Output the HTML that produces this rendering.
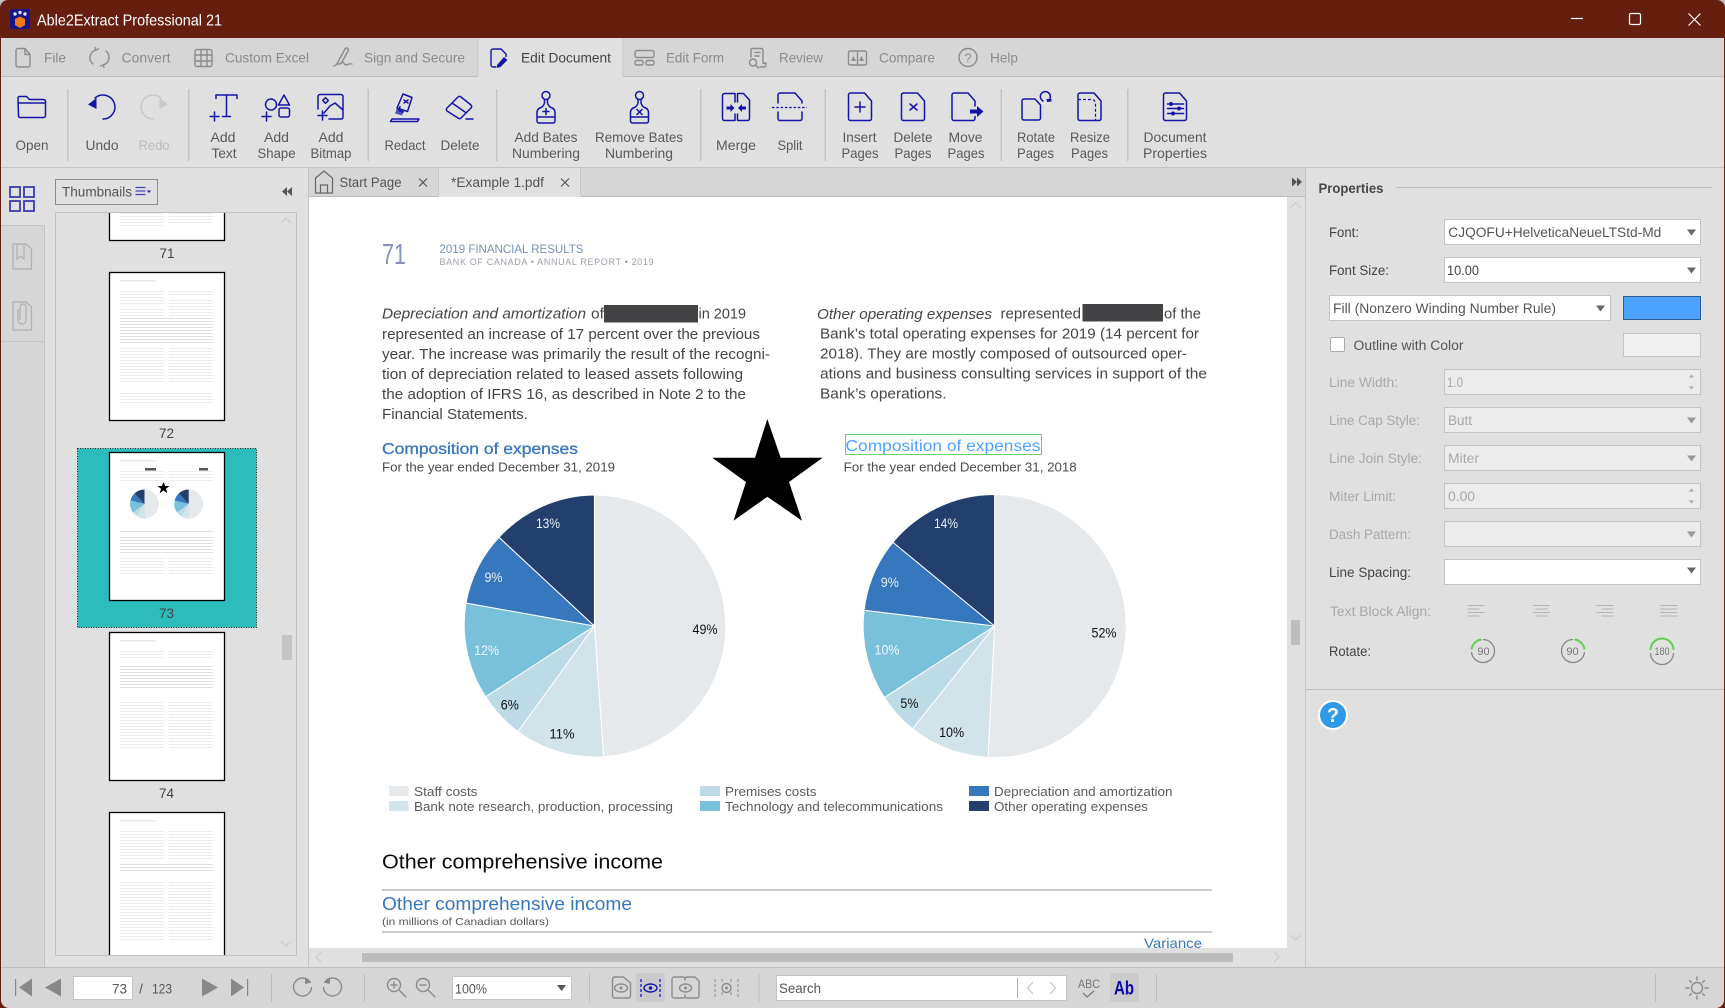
<!DOCTYPE html>
<html lang="en"><head><meta charset="utf-8"><title>Able2Extract Professional 21</title>
<style>
html,body{margin:0;padding:0;width:1725px;height:1008px;overflow:hidden;background:#e0e0e0}
svg{display:block;font-family:"Liberation Sans",sans-serif}
.r{font-size:14px;fill:#5a5a5a;text-anchor:middle}
.rd{font-size:14px;fill:#bbb;text-anchor:middle}
.m{font-size:14px;fill:#8c8c8c}
.l{font-size:13.5px;fill:#444}
.d{font-size:13.5px;fill:#a8a8a8}
.b{font-size:14.5px;fill:#454545}
.i{font-size:14.5px;fill:#454545;font-style:italic}
.p{font-size:13.5px;text-anchor:middle}
.lg{font-size:13px;fill:#5a5a5a}
.ic{fill:none;stroke:#1414a8;stroke-width:1.5;stroke-linejoin:round;stroke-linecap:round}
.gi{fill:none;stroke:#8c8c8c;stroke-width:1.4;stroke-linejoin:round;stroke-linecap:round}
</style></head><body>
<svg width="1725" height="1008" viewBox="0 0 1725 1008" xmlns="http://www.w3.org/2000/svg">
<defs>
<pattern id="g" width="4" height="3" patternUnits="userSpaceOnUse"><rect width="4" height="1" fill="#ececec"/></pattern>
<pattern id="h" width="4" height="3" patternUnits="userSpaceOnUse"><rect width="4" height="1" fill="#e0e0e0"/></pattern>
</defs>
<!-- window -->
<rect width="1725" height="1008" fill="#661f0f"/>
<rect x="1" y="38" width="1723" height="970" fill="#e0e0e0"/>
<!-- title -->
<rect x="10" y="9" width="20" height="20" rx="2" fill="#16168a"/>
<path d="M15 19l5-2.5 5 2.5v6l-5 3-5-3z" fill="#ee7a1c"/>
<circle cx="15" cy="14" r="1.7" fill="#dfe3ff"/><circle cx="20" cy="12.5" r="1.7" fill="#dfe3ff"/><circle cx="25" cy="14" r="1.7" fill="#dfe3ff"/>
<text x="37" y="25.5" font-size="16" fill="#fff" textLength="185" lengthAdjust="spacingAndGlyphs">Able2Extract Professional 21</text>
<path d="M1571 18.5h12" stroke="#fff" stroke-width="1.2"/>
<rect x="1629.5" y="13.5" width="11" height="11" rx="1.5" fill="none" stroke="#fff" stroke-width="1.2"/>
<path d="M1688.5 13.5l12 12M1700.5 13.5l-12 12" stroke="#fff" stroke-width="1.2"/>
<!-- menu -->
<rect x="1" y="38" width="1723" height="38" fill="#d6d6d6"/>
<rect x="1" y="76" width="1723" height="1" fill="#bdbdbd"/>
<rect x="478" y="38" width="145" height="39" fill="#e0e0e0"/>
<path d="M478 76V38M623 76V38" stroke="#c8c8c8"/>
<path class="gi" d="M18 48.5h7l5 6v10.500a2 2 0 0 1-2 2h-10a2 2 0 0 1-2-2v-14.500a2 2 0 0 1 2-2zM25 48.500v6h5"/>
<text class="m" x="44" y="62.500" textLength="22" lengthAdjust="spacingAndGlyphs">File</text>
<path class="gi" d="M93 64a8 8 0 0 1 3-14l-1-2.500M106 51a8 8 0 0 1-3 14l1 2.500M96 50l2.500-1M103 65l-2.500 1"/>
<text class="m" x="121.500" y="62.500" textLength="49" lengthAdjust="spacingAndGlyphs">Convert</text>
<path class="gi" d="M197 49.500h13a2 2 0 0 1 2 2v13a2 2 0 0 1-2 2h-13a2 2 0 0 1-2-2v-13a2 2 0 0 1 2-2zM195 55h17M195 61h17M201 49.500v17M207 49.500v17"/>
<text class="m" x="225" y="62.500" textLength="84" lengthAdjust="spacingAndGlyphs">Custom Excel</text>
<path class="gi" d="M334 66c3-1 4-3 5-6l6-11c1-2 4-1 3 2l-6 11c-1 2-4 3-5 1M342 62c2 0 2 3 4 3s3-2 6-1"/>
<text class="m" x="364" y="62.500" textLength="101" lengthAdjust="spacingAndGlyphs">Sign and Secure</text>
<path d="M493 49h8l5 5v3M493 49a2 2 0 0 0-2 2v14a2 2 0 0 0 2 2h3" fill="none" stroke="#1414a8" stroke-width="1.4"/>
<path d="M497 65l7-8 3.500 3-7 7-4 1z" fill="#1414a8"/>
<text x="521" y="62.500" font-size="14" fill="#444" textLength="90" lengthAdjust="spacingAndGlyphs">Edit Document</text>
<path class="gi" d="M637 50.500h15a2 2 0 0 1 2 2v3a2 2 0 0 1-2 2h-15a2 2 0 0 1-2-2v-3a2 2 0 0 1 2-2zM636.500 60.500h5a1.500 1.500 0 0 1 1.500 1.500v1.500a1.500 1.500 0 0 1-1.500 1.500h-5a1.500 1.500 0 0 1-1.500-1.500v-1.500a1.500 1.500 0 0 1 1.500-1.500zM647.500 60.500h5a1.500 1.500 0 0 1 1.500 1.500v1.500a1.500 1.500 0 0 1-1.500 1.500h-5a1.500 1.500 0 0 1-1.500-1.500v-1.500a1.500 1.500 0 0 1 1.500-1.500z"/>
<text class="m" x="666" y="62.500" textLength="58" lengthAdjust="spacingAndGlyphs">Edit Form</text>
<path class="gi" d="M751 57v-7a1.500 1.500 0 0 1 1.500-1.500h9a1.500 1.500 0 0 1 1.500 1.500v13.500l3-.5v2a2 2 0 0 1-2 2h-4M755 52.500h5M755 56h4"/>
<circle class="gi" cx="753" cy="62.500" r="3.500"/><path class="gi" d="M755.500 65l3 3"/>
<text class="m" x="779" y="62.500" textLength="44" lengthAdjust="spacingAndGlyphs">Review</text>
<rect class="gi" x="848.500" y="51" width="18" height="14" rx="1.500"/><path class="gi" d="M857.500 51v14"/>
<path d="M851 61l2.500-5 2.500 5zM859 61l2.500-5 2.500 5z" fill="#8c8c8c"/>
<text class="m" x="879" y="62.500" textLength="56" lengthAdjust="spacingAndGlyphs">Compare</text>
<circle class="gi" cx="968" cy="57.500" r="9"/>
<text x="968" y="62.500" font-size="13" fill="#8c8c8c" text-anchor="middle">?</text>
<text class="m" x="990" y="62.500" textLength="28" lengthAdjust="spacingAndGlyphs">Help</text>
<!-- ribbon -->
<rect x="1" y="77" width="1723" height="90" fill="#e0e0e0"/>
<rect x="1" y="167" width="1723" height="1" fill="#c4c4c4"/>
<g fill="#c4c4c4">
<rect x="67" y="89" width="1.500" height="72"/><rect x="188" y="89" width="1.500" height="72"/><rect x="367.500" y="89" width="1.500" height="72"/><rect x="496" y="89" width="1.500" height="72"/><rect x="700" y="89" width="1.500" height="72"/><rect x="824.500" y="89" width="1.500" height="72"/><rect x="1000.500" y="89" width="1.500" height="72"/><rect x="1127" y="89" width="1.500" height="72"/>
</g>
<!-- ribbon icons -->
<path class="ic" d="M18 98a1.500 1.500 0 0 1 1.500-1.500h7l3 3h14a2 2 0 0 1 2 2v14a2 2 0 0 1-2 2h-23.500a1.500 1.500 0 0 1-1.500-1.500zM18 103h27.500"/>
<path d="M88 104.500l8.500-6.500v11z" fill="#1414a8"/>
<path class="ic" d="M95 98a12 12 0 1 1 8 21"/>
<path d="M168 104.500l-8.500-6.500v11z" fill="#c8c8c8"/>
<path d="M161 98a12 12 0 1 0-8 21" fill="none" stroke="#c8c8c8" stroke-width="1.500" stroke-linecap="round"/>
<path class="ic" d="M216 95h21M216 95v3.500M237 95v3.500M226.500 95v21.500M222.500 116.500h8M210 116.500h9M214.500 112v9"/>
<circle class="ic" cx="271" cy="104.500" r="5.500"/><path class="ic" d="M284 95l-5.500 10h11zM281 108h6.500a2 2 0 0 1 2 2v5a2 2 0 0 1-2 2h-6.500a2 2 0 0 1-2-2v-5a2 2 0 0 1 2-2zM262 116.500h9M266.500 112v9"/>
<path class="ic" d="M318 109V96.500a2 2 0 0 1 2-2h21a2 2 0 0 1 2 2v20.500a2 2 0 0 1-2 2h-12M324 113l6-7 5-3 8 7"/>
<rect class="ic" x="323.500" y="98.500" width="4" height="4" transform="rotate(45 325.500 100.500)"/>
<path class="ic" d="M318 115.500h9M322.500 111v9"/>
<path class="ic" d="M397 108l6-14 9 3.500-4.500 14zM403 112l-4-1.500 1-4M392 119h27l-1.500 2.500h-27zM404 100l4 3M408 100l-4 3"/>
<path d="M397 108l7 3-2 4.500-7-2z" fill="#1414a8" opacity=".7"/>
<path class="ic" d="M447 108l11-11a2 2 0 0 1 3 0l10 8a2 2 0 0 1 0 3l-10 10a2 2 0 0 1-3 0l-11-7a2 2 0 0 1 0-3zM452 103l13 9M466 119h7"/>
<!-- add bates -->
<circle class="ic" cx="546" cy="95.500" r="4"/>
<path class="ic" d="M544.500 99.500v3c0 2-1 3-2.500 4.500M547.500 99.500v3c0 2 1 3 2.500 4.500M542 107c-3 1-5 2.500-5 5v9a2 2 0 0 0 2 2h14a2 2 0 0 0 2-2v-9c0-2.500-2-4-5-5M537 117h18M546 108.500v6M543 111.500h6"/>
<!-- remove bates -->
<circle class="ic" cx="639.500" cy="95.500" r="4"/>
<path class="ic" d="M638 99.500v3c0 2-1 3-2.500 4.500M641 99.500v3c0 2 1 3 2.500 4.500M635.500 107c-3 1-5 2.500-5 5v9a2 2 0 0 0 2 2h14a2 2 0 0 0 2-2v-9c0-2.500-2-4-5-5M630.500 117h18M637 109.500l5 5M642 109.500l-5 5"/>
<!-- merge -->
<path class="ic" d="M735 102V93.500h-10.500a2 2 0 0 0-2 2v23a2 2 0 0 0 2 2H735V114M737.500 102V93.500h6l6 6.500v18.500a2 2 0 0 1-2 2h-10V114"/>
<path d="M726.500 106.500h4v-2.500l4 4-4 4v-2.500h-4zM746 106.500h-4v-2.500l-4 4 4 4v-2.500h4z" fill="#1414a8"/>
<!-- split -->
<path class="ic" d="M778 103v-8a2 2 0 0 1 2-2h15l7 8v2M778 112v6.500a2 2 0 0 0 2 2h20a2 2 0 0 0 2-2V112"/><path d="M772 107.500h35" stroke="#1414a8" stroke-width="1.300" stroke-dasharray="2.500 1.800" fill="none"/>
<path class="ic" d="M848.500 95a2 2 0 0 1 2-2h14l7 8v17.500a2 2 0 0 1-2 2h-19a2 2 0 0 1-2-2zM860 102v10M855 107h10"/>
<path class="ic" d="M901.500 95a2 2 0 0 1 2-2h14l7 8v17.500a2 2 0 0 1-2 2h-19a2 2 0 0 1-2-2zM910 104l7 6M917 104l-7 6"/>
<!-- move -->
<path class="ic" d="M975 106v-5l-7-8h-14a2 2 0 0 0-2 2v23.500a2 2 0 0 0 2 2h19a2 2 0 0 0 2-2v-2"/><path d="M970 109.500h7v-3.500l6.500 5.500-6.500 5.500v-3.500h-7z" fill="#1414a8"/>
<path class="ic" d="M1022 101a2 2 0 0 1 2-2h11l5.500 6v13a2 2 0 0 1-2 2h-14.500a2 2 0 0 1-2-2zM1043 101a5 5 0 1 1 6-1"/><path d="M1046.500 99h5v2.500l-4.500.5z" fill="#1414a8"/>
<path class="ic" d="M1078 95a2 2 0 0 1 2-2h14l7 8v17.500a2 2 0 0 1-2 2h-19a2 2 0 0 1-2-2z"/><path d="M1078 99.500h14a4 4 0 0 1 3.500 4v17" fill="none" stroke="#1414a8" stroke-width="1.200" stroke-dasharray="3 2"/>
<path class="ic" d="M1163.500 95a2 2 0 0 1 2-2h14l7 8v17.500a2 2 0 0 1-2 2h-19a2 2 0 0 1-2-2zM1167.500 104h16M1167.500 108.500h16M1167.500 113.500h16"/>
<circle cx="1171" cy="104" r="2" fill="#1414a8"/><circle cx="1179" cy="108.500" r="2" fill="#1414a8"/><circle cx="1173" cy="113.500" r="2" fill="#1414a8"/>
<!-- ribbon labels -->
<text class="r" x="32" y="150" textLength="33" lengthAdjust="spacingAndGlyphs">Open</text>
<text class="r" x="102" y="150" textLength="33" lengthAdjust="spacingAndGlyphs">Undo</text>
<text class="rd" x="154" y="150" textLength="31" lengthAdjust="spacingAndGlyphs">Redo</text>
<text class="r" x="223" y="142" textLength="25" lengthAdjust="spacingAndGlyphs">Add</text><text class="r" x="224" y="158" textLength="25" lengthAdjust="spacingAndGlyphs">Text</text>
<text class="r" x="276.500" y="142" textLength="25" lengthAdjust="spacingAndGlyphs">Add</text><text class="r" x="276.500" y="158" textLength="38" lengthAdjust="spacingAndGlyphs">Shape</text>
<text class="r" x="331" y="142" textLength="25" lengthAdjust="spacingAndGlyphs">Add</text><text class="r" x="331" y="158" textLength="41" lengthAdjust="spacingAndGlyphs">Bitmap</text>
<text class="r" x="405" y="150" textLength="41" lengthAdjust="spacingAndGlyphs">Redact</text>
<text class="r" x="460" y="150" textLength="39" lengthAdjust="spacingAndGlyphs">Delete</text>
<text class="r" x="546" y="142" textLength="63" lengthAdjust="spacingAndGlyphs">Add Bates</text><text class="r" x="546" y="158" textLength="68" lengthAdjust="spacingAndGlyphs">Numbering</text>
<text class="r" x="639" y="142" textLength="88" lengthAdjust="spacingAndGlyphs">Remove Bates</text><text class="r" x="639" y="158" textLength="68" lengthAdjust="spacingAndGlyphs">Numbering</text>
<text class="r" x="736" y="150" textLength="40" lengthAdjust="spacingAndGlyphs">Merge</text>
<text class="r" x="790" y="150" textLength="25" lengthAdjust="spacingAndGlyphs">Split</text>
<text class="r" x="859.500" y="142" textLength="34" lengthAdjust="spacingAndGlyphs">Insert</text><text class="r" x="860" y="158" textLength="37" lengthAdjust="spacingAndGlyphs">Pages</text>
<text class="r" x="913" y="142" textLength="39" lengthAdjust="spacingAndGlyphs">Delete</text><text class="r" x="913" y="158" textLength="37" lengthAdjust="spacingAndGlyphs">Pages</text>
<text class="r" x="965.500" y="142" textLength="34" lengthAdjust="spacingAndGlyphs">Move</text><text class="r" x="966" y="158" textLength="37" lengthAdjust="spacingAndGlyphs">Pages</text>
<text class="r" x="1036" y="142" textLength="38" lengthAdjust="spacingAndGlyphs">Rotate</text><text class="r" x="1035.500" y="158" textLength="37" lengthAdjust="spacingAndGlyphs">Pages</text>
<text class="r" x="1090" y="142" textLength="40" lengthAdjust="spacingAndGlyphs">Resize</text><text class="r" x="1089.500" y="158" textLength="37" lengthAdjust="spacingAndGlyphs">Pages</text>
<text class="r" x="1175" y="142" textLength="63" lengthAdjust="spacingAndGlyphs">Document</text><text class="r" x="1175" y="158" textLength="64" lengthAdjust="spacingAndGlyphs">Properties</text>
<!-- left rail -->
<rect x="1" y="225" width="43" height="742" fill="#d6d6d6"/>
<rect x="1" y="225" width="43" height="1" fill="#c4c4c4"/><rect x="1" y="341" width="43" height="1" fill="#c4c4c4"/>
<rect x="44" y="225" width="1" height="742" fill="#c4c4c4"/>
<g fill="none" stroke="#3c3cb4" stroke-width="1.800"><rect x="10" y="187" width="10" height="10"/><rect x="24" y="187" width="10" height="10"/><rect x="10" y="201" width="10" height="10"/><rect x="24" y="201" width="10" height="10"/></g>
<path d="M13 244h13l5.500 5v20h-18.500zM17 244v15l3.500-3 3.500 3v-15" fill="none" stroke="#b0b0b0" stroke-width="1.200"/>
<path d="M13 302h13l5.500 5v23h-18.500zM18 309v11a4 4 0 0 0 8 0v-13a3 3 0 0 0-6 0v13" fill="none" stroke="#b0b0b0" stroke-width="1.200"/>
<!-- thumbnails header -->
<rect x="55.500" y="179.500" width="102" height="25" fill="#e0e0e0" stroke="#8c8c8c"/>
<text x="62" y="196.500" font-size="13.500" fill="#555" textLength="70" lengthAdjust="spacingAndGlyphs">Thumbnails</text>
<path d="M135.500 187.500h10M135.500 191h10M135.500 194.500h10" stroke="#4646bc" stroke-width="1.300"/><path d="M147 190.500h4l-2 2.500z" fill="#1414a8"/>
<path d="M287 187l-5 4.500 5 4.500zM292 187l-5 4.500 5 4.500z" fill="#555"/>
<!-- thumbnails list -->
<rect x="55.500" y="212.500" width="241" height="743" fill="#e0e0e0" stroke="#c0c0c0"/>
<svg x="56" y="213" width="240" height="742" viewBox="56 213 240 742">
<rect x="77.500" y="448.500" width="179" height="179" fill="#2dbcbc" stroke="#222" stroke-width="1" stroke-dasharray="1 1.500"/>
<g fill="#fff" stroke="#000" stroke-width="1.300">
<rect x="109.500" y="150" width="115" height="90.500"/><rect x="109.500" y="272.500" width="115" height="148"/><rect x="109.500" y="452.500" width="115" height="148"/><rect x="109.500" y="632.500" width="115" height="148"/><rect x="109.500" y="812.500" width="115" height="148"/>
</g>
<g fill="url(#g)">
<rect x="120" y="213" width="44" height="14"/><rect x="169" y="213" width="44" height="11"/>
<rect x="120" y="289" width="44" height="15"/><rect x="169" y="289" width="44" height="7"/><rect x="120" y="307" width="44" height="10"/><rect x="169" y="299" width="44" height="18"/>
<rect x="120" y="348" width="44" height="36"/><rect x="169" y="348" width="44" height="36"/><rect x="121" y="391" width="92" height="14"/>
<rect x="120" y="469" width="44" height="14"/><rect x="169" y="469" width="44" height="12"/><rect x="120" y="558" width="44" height="16"/><rect x="169" y="558" width="44" height="16"/>
<rect x="120" y="650" width="44" height="10"/><rect x="169" y="650" width="44" height="10"/><rect x="120" y="700" width="44" height="50"/><rect x="169" y="700" width="44" height="50"/>
<rect x="120" y="830" width="44" height="30"/><rect x="169" y="830" width="44" height="30"/><rect x="120" y="880" width="44" height="60"/><rect x="169" y="880" width="44" height="60"/>
</g>
<g fill="url(#h)">
<rect x="120" y="316" width="93" height="12"/><rect x="120" y="330" width="93" height="13"/>
<rect x="120" y="530" width="93" height="3"/><rect x="120" y="537" width="93" height="16"/>
<rect x="120" y="665" width="93" height="24"/>
<rect x="120" y="862" width="93" height="10"/>
</g>
<rect x="120" y="280" width="36" height="1.500" fill="#e8e8e8"/><rect x="120" y="460" width="36" height="1.500" fill="#e8e8e8"/><rect x="120" y="640" width="36" height="1.500" fill="#e8e8e8"/><rect x="120" y="820" width="36" height="1.500" fill="#e8e8e8"/>
<rect x="145" y="468" width="11" height="2.500" fill="#555"/><rect x="199" y="468" width="9" height="2.500" fill="#555"/>
<path d="M163.500 482l1.600 4h4.400l-3.500 2.800 1.300 4.400-3.800-2.700-3.800 2.700 1.300-4.400-3.500-2.800h4.400z" fill="#000"/>
<circle cx="144.500" cy="504" r="14.500" fill="#e6e9ec"/><path d="M144.500 504v-14.500a14.500 14.500 0 0 0-10 4z" fill="#233f6e"/><path d="M144.500 504l-10-10.500a14.500 14.500 0 0 0-4 7z" fill="#3777bd"/><path d="M144.500 504l-14-3.500a14.500 14.500 0 0 0 2.500 12z" fill="#79c0da"/><path d="M144.500 504l-11.500 8.500a14.500 14.500 0 0 0 4 3.500z" fill="#bcdbe7"/><path d="M144.500 504l-7.500 12a14.500 14.500 0 0 0 8.500 2.500z" fill="#d2e3ea"/>
<circle cx="188.700" cy="504" r="14.500" fill="#e6e9ec"/><path d="M188.700 504v-14.500a14.500 14.500 0 0 0-10 4z" fill="#233f6e"/><path d="M188.700 504l-10-10.500a14.500 14.500 0 0 0-4 7z" fill="#3777bd"/><path d="M188.700 504l-14-3.500a14.500 14.500 0 0 0 2.500 12z" fill="#79c0da"/><path d="M188.700 504l-11.500 8.500a14.500 14.500 0 0 0 4 3.500z" fill="#bcdbe7"/><path d="M188.700 504l-7.500 12a14.500 14.500 0 0 0 8 2.500z" fill="#d2e3ea"/>
<g font-size="13.500" fill="#444" text-anchor="middle"><text x="167" y="258">71</text><text x="166.500" y="438">72</text><text x="166.500" y="618">73</text><text x="166.500" y="798">74</text></g>
<path d="M281 223l5-5 5 5" fill="none" stroke="#cfcfcf" stroke-width="1.500"/><path d="M281 941l5 5 5-5" fill="none" stroke="#cfcfcf" stroke-width="1.500"/>
<rect x="282" y="635" width="10" height="25" fill="#c4c4c4"/>
</svg>
<!-- tabs bar -->
<rect x="309" y="168" width="996" height="28" fill="#d6d6d6"/>
<rect x="309" y="196" width="996" height="1" fill="#bdbdbd"/>
<rect x="308" y="168" width="1" height="800" fill="#c4c4c4"/>
<rect x="438" y="168" width="143" height="29" fill="#e0e0e0"/>
<path d="M438.500 168v28M580.500 168v28" stroke="#c8c8c8"/>
<path d="M315.500 178l8.500-7 8.500 7v15h-17zM320.500 193v-8h7v8" fill="none" stroke="#666" stroke-width="1.200"/>
<text x="339.500" y="187" font-size="13.500" fill="#555" textLength="62" lengthAdjust="spacingAndGlyphs">Start Page</text>
<path d="M419 178.500l8 8M427 178.500l-8 8" stroke="#555" stroke-width="1.200"/>
<text x="451" y="187" font-size="13.500" fill="#555" textLength="93" lengthAdjust="spacingAndGlyphs">*Example 1.pdf</text>
<path d="M561 178.500l8 8M569 178.500l-8 8" stroke="#555" stroke-width="1.200"/>
<path d="M1292 177.500l5 4.500-5 4.500zM1297 177.500l5 4.500-5 4.500z" fill="#555"/>
<!-- document -->
<rect x="309" y="197" width="978" height="751" fill="#fff"/>
<text x="382" y="264" font-size="29" fill="#8592ba" textLength="24" lengthAdjust="spacingAndGlyphs">71</text>
<text x="439.500" y="253" font-size="12" fill="#7a92b8" textLength="144" lengthAdjust="spacingAndGlyphs">2019 FINANCIAL RESULTS</text>
<text x="439.500" y="265" font-size="9" fill="#9a9fa8" textLength="214">BANK OF CANADA  •  ANNUAL REPORT  •  2019</text>
<!-- left para -->
<text class="i" x="382" y="318.500" textLength="204" lengthAdjust="spacingAndGlyphs">Depreciation and amortization</text>
<text class="b" x="591" y="318.500" textLength="13" lengthAdjust="spacingAndGlyphs">of</text>
<rect x="604" y="305" width="94" height="17.500" fill="#434345"/>
<text class="b" x="698.500" y="318.500" textLength="47.500" lengthAdjust="spacingAndGlyphs">in 2019</text>
<text class="b" x="382" y="339" textLength="378" lengthAdjust="spacingAndGlyphs">represented an increase of 17 percent over the previous</text>
<text class="b" x="382" y="359" textLength="388" lengthAdjust="spacingAndGlyphs">year. The increase was primarily the result of the recogni-</text>
<text class="b" x="382" y="379" textLength="361" lengthAdjust="spacingAndGlyphs">tion of depreciation related to leased assets following</text>
<text class="b" x="382" y="399" textLength="364" lengthAdjust="spacingAndGlyphs">the adoption of IFRS 16, as described in Note 2 to the</text>
<text class="b" x="382" y="419" textLength="146" lengthAdjust="spacingAndGlyphs">Financial Statements.</text>
<!-- right para -->
<text class="i" x="817" y="319" textLength="175" lengthAdjust="spacingAndGlyphs">Other operating expenses</text>
<text class="b" x="1000.500" y="318.500" textLength="80.500" lengthAdjust="spacingAndGlyphs">represented</text>
<rect x="1082.500" y="304" width="80.500" height="17.500" fill="#434345"/>
<text class="b" x="1164" y="318.500" textLength="37" lengthAdjust="spacingAndGlyphs">of the</text>
<text class="b" x="820" y="338.500" textLength="379" lengthAdjust="spacingAndGlyphs">Bank’s total operating expenses for 2019 (14 percent for</text>
<text class="b" x="820" y="358.500" textLength="367" lengthAdjust="spacingAndGlyphs">2018). They are mostly composed of outsourced oper-</text>
<text class="b" x="820" y="378.500" textLength="387" lengthAdjust="spacingAndGlyphs">ations and business consulting services in support of the</text>
<text class="b" x="820" y="398.500" textLength="126.500" lengthAdjust="spacingAndGlyphs">Bank’s operations.</text>
<!-- headings -->
<text x="382" y="454" font-size="15.500" fill="#3777bd" stroke="#3777bd" stroke-width=".3" textLength="196" lengthAdjust="spacingAndGlyphs">Composition of expenses</text>
<text x="382" y="471.500" font-size="13" fill="#4a4a4a" textLength="233" lengthAdjust="spacingAndGlyphs">For the year ended December 31, 2019</text>
<rect x="845.500" y="434.500" width="196" height="20" fill="none" stroke="#6fd06f" stroke-width="1"/>
<text x="845.500" y="451" font-size="15.500" fill="#4da3ff" textLength="195" lengthAdjust="spacingAndGlyphs">Composition of expenses</text>
<text x="843.700" y="471.500" font-size="13" fill="#4a4a4a" textLength="233" lengthAdjust="spacingAndGlyphs">For the year ended December 31, 2018</text>
<!-- star -->
<path d="M767.300 419L780.700 457.700H822.700L789 482L802 520.700L767.400 496.700L733.500 520.700L746 482L712.300 457.700H755z" fill="#000"/>
<!-- left pie -->
<g stroke="#fff" stroke-width="1">
<path d="M594.400 626V495A131 131 0 0 1 603.600 756.700z" fill="#e6e9ec"/>
<path d="M594.400 626L603.600 756.700A131 131 0 0 1 517.900 731.700z" fill="#d2e3ea"/>
<path d="M594.400 626L517.900 731.700A131 131 0 0 1 485.700 696.700z" fill="#bcdbe7"/>
<path d="M594.400 626L485.700 696.700A131 131 0 0 1 466 603z" fill="#79c0da"/>
<path d="M594.400 626L466 603A131 131 0 0 1 499 537.300z" fill="#3777bd"/>
<path d="M594.400 626L499 537.300A131 131 0 0 1 594.400 495z" fill="#233f6e"/>
</g>
<!-- right pie -->
<g stroke="#fff" stroke-width="1">
<path d="M994.600 626V494.500A131.500 131.500 0 1 1 988 757.330z" fill="#e6e9ec"/>
<path d="M994.600 626L988 757.330A131.500 131.500 0 0 1 912.500 728.800z" fill="#d2e3ea"/>
<path d="M994.600 626L912.500 728.800A131.500 131.500 0 0 1 884.400 697.500z" fill="#bcdbe7"/>
<path d="M994.600 626L884.400 697.500A131.500 131.500 0 0 1 864.100 610.300z" fill="#79c0da"/>
<path d="M994.600 626L864.100 610.300A131.500 131.500 0 0 1 892.900 542.300z" fill="#3777bd"/>
<path d="M994.600 626L892.900 542.300A131.500 131.500 0 0 1 994.600 494.500z" fill="#233f6e"/>
</g>
<g class="pct">
<text class="p" x="705" y="634" fill="#111" textLength="25" lengthAdjust="spacingAndGlyphs">49%</text>
<text class="p" x="548" y="528" fill="#e8eef5" textLength="24" lengthAdjust="spacingAndGlyphs">13%</text>
<text class="p" x="493.500" y="582" fill="#e8eef5" textLength="18" lengthAdjust="spacingAndGlyphs">9%</text>
<text class="p" x="486.600" y="655" fill="#f0f7fa" textLength="25" lengthAdjust="spacingAndGlyphs">12%</text>
<text class="p" x="509.800" y="709.500" fill="#111" textLength="18" lengthAdjust="spacingAndGlyphs">6%</text>
<text class="p" x="562" y="738.500" fill="#111" textLength="25" lengthAdjust="spacingAndGlyphs">11%</text>
<text class="p" x="1104" y="637.500" fill="#111" textLength="25" lengthAdjust="spacingAndGlyphs">52%</text>
<text class="p" x="946" y="528" fill="#e8eef5" textLength="24" lengthAdjust="spacingAndGlyphs">14%</text>
<text class="p" x="889.800" y="587" fill="#e8eef5" textLength="18" lengthAdjust="spacingAndGlyphs">9%</text>
<text class="p" x="887" y="654.500" fill="#f0f7fa" textLength="25" lengthAdjust="spacingAndGlyphs">10%</text>
<text class="p" x="909.400" y="708" fill="#111" textLength="18" lengthAdjust="spacingAndGlyphs">5%</text>
<text class="p" x="951.600" y="737" fill="#111" textLength="25" lengthAdjust="spacingAndGlyphs">10%</text>
</g>
<!-- legend -->
<rect x="389" y="786" width="19.500" height="10" fill="#e6e9ec"/><rect x="389" y="801" width="19.500" height="10" fill="#d2e3ea"/>
<rect x="700" y="786" width="20" height="10" fill="#bcdbe7"/><rect x="700" y="801" width="20" height="10" fill="#79c0da"/>
<rect x="969" y="786" width="20" height="10" fill="#3777bd"/><rect x="969" y="801" width="20" height="10" fill="#233f6e"/>
<text class="lg" x="414" y="796" textLength="63.500" lengthAdjust="spacingAndGlyphs">Staff costs</text>
<text class="lg" x="414" y="811" textLength="259" lengthAdjust="spacingAndGlyphs">Bank note research, production, processing</text>
<text class="lg" x="725" y="796" textLength="91.500" lengthAdjust="spacingAndGlyphs">Premises costs</text>
<text class="lg" x="725" y="811" textLength="218" lengthAdjust="spacingAndGlyphs">Technology and telecommunications</text>
<text class="lg" x="994" y="796" textLength="178.500" lengthAdjust="spacingAndGlyphs">Depreciation and amortization</text>
<text class="lg" x="994" y="811" textLength="154" lengthAdjust="spacingAndGlyphs">Other operating expenses</text>
<text x="382" y="868.500" font-size="20" fill="#0a0a0a" textLength="281" lengthAdjust="spacingAndGlyphs">Other comprehensive income</text>
<rect x="382" y="889.500" width="830" height="1" fill="#999"/>
<text x="382" y="910" font-size="18" fill="#3777bd" textLength="250" lengthAdjust="spacingAndGlyphs">Other comprehensive income</text>
<text x="382" y="925" font-size="10.500" fill="#555" textLength="167" lengthAdjust="spacingAndGlyphs">(in millions of Canadian dollars)</text>
<rect x="382" y="931.500" width="830" height="1" fill="#999"/>
<svg x="309" y="197" width="978" height="751" viewBox="309 197 978 751"><text x="1144" y="948" font-size="14" fill="#3777bd" textLength="58" lengthAdjust="spacingAndGlyphs">Variance</text></svg>
<!-- scrollbars -->
<rect x="1287" y="197" width="18" height="770" fill="#e0e0e0"/>
<rect x="309" y="948" width="996" height="19" fill="#e0e0e0"/>
<rect x="1291" y="620" width="9" height="25" fill="#bdbdbd"/>
<rect x="362" y="953" width="871" height="9" fill="#bdbdbd"/>
<path d="M1290 208l5.500-5 5.500 5M1290 935l5.500 5 5.500-5" fill="none" stroke="#cfcfcf" stroke-width="1.500"/>
<path d="M321 952l-5 5 5 5M1274 952l5 5-5 5" fill="none" stroke="#cfcfcf" stroke-width="1.500"/>
<!-- properties -->
<rect x="1305" y="168" width="1" height="800" fill="#c4c4c4"/>
<text x="1318.500" y="193" font-size="13.500" font-weight="bold" fill="#484848" textLength="65" lengthAdjust="spacingAndGlyphs">Properties</text>
<rect x="1396" y="187" width="316" height="1" fill="#bdbdbd"/>
<!-- fields -->
<g stroke="#c4c4c4" stroke-width="1">
<rect x="1444.500" y="219.500" width="256" height="25" fill="#fff"/>
<rect x="1444.500" y="257.500" width="256" height="25" fill="#fff"/>
<rect x="1329.500" y="295.500" width="281" height="25" fill="#fff"/>
<rect x="1623.500" y="333.500" width="77" height="23" fill="#f0f0f0"/>
<rect x="1330.500" y="337.500" width="14" height="14" rx="1.500" fill="#fff" stroke="#aaa"/>
<rect x="1444.500" y="369.500" width="256" height="25" fill="#ececec"/>
<rect x="1444.500" y="407.500" width="256" height="25" fill="#ececec"/>
<rect x="1444.500" y="445.500" width="256" height="25" fill="#ececec"/>
<rect x="1444.500" y="483.500" width="256" height="25" fill="#ececec"/>
<rect x="1444.500" y="521.500" width="256" height="25" fill="#ececec"/>
<rect x="1444.500" y="559.500" width="256" height="25" fill="#fff"/>
</g>
<rect x="1623.500" y="296.500" width="77" height="23" fill="#4da3ff" stroke="#2a5f95"/>
<path d="M1687 229.500h9l-4.500 6zM1687 267.500h9l-4.500 6zM1596 305.500h9l-4.500 6zM1687 567.500h9l-4.500 6z" fill="#666"/>
<path d="M1687 417.500h9l-4.500 6zM1687 455.500h9l-4.500 6zM1687 531.500h9l-4.500 6z" fill="#999"/>
<path d="M1691.500 374.500l2.500 3h-5zM1691.500 389.500l2.500-3h-5zM1691.500 488.500l2.500 3h-5zM1691.500 503.500l2.500-3h-5z" fill="#aaa"/>
<text class="l" x="1329" y="237" textLength="30" lengthAdjust="spacingAndGlyphs">Font:</text>
<text x="1448.300" y="237" font-size="13.500" fill="#555" textLength="213" lengthAdjust="spacingAndGlyphs">CJQOFU+HelveticaNeueLTStd-Md</text>
<text class="l" x="1329" y="275" textLength="60" lengthAdjust="spacingAndGlyphs">Font Size:</text>
<text x="1447" y="275" font-size="13.500" fill="#444" textLength="32" lengthAdjust="spacingAndGlyphs">10.00</text>
<text x="1333" y="313" font-size="13.500" fill="#555" textLength="223" lengthAdjust="spacingAndGlyphs">Fill (Nonzero Winding Number Rule)</text>
<text x="1353.500" y="350" font-size="13.500" fill="#555" textLength="110" lengthAdjust="spacingAndGlyphs">Outline with Color</text>
<text class="d" x="1329" y="387" textLength="69" lengthAdjust="spacingAndGlyphs">Line Width:</text>
<text class="d" x="1447" y="387" textLength="16" lengthAdjust="spacingAndGlyphs">1.0</text>
<text class="d" x="1329" y="425" textLength="91" lengthAdjust="spacingAndGlyphs">Line Cap Style:</text>
<text class="d" x="1448" y="425" textLength="24" lengthAdjust="spacingAndGlyphs">Butt</text>
<text class="d" x="1329" y="463" textLength="93" lengthAdjust="spacingAndGlyphs">Line Join Style:</text>
<text class="d" x="1448" y="463" textLength="31" lengthAdjust="spacingAndGlyphs">Miter</text>
<text class="d" x="1329" y="501" textLength="67" lengthAdjust="spacingAndGlyphs">Miter Limit:</text>
<text class="d" x="1448" y="501" textLength="27" lengthAdjust="spacingAndGlyphs">0.00</text>
<text class="d" x="1329" y="539" textLength="82" lengthAdjust="spacingAndGlyphs">Dash Pattern:</text>
<text class="l" x="1329" y="577" fill="#333" textLength="82" lengthAdjust="spacingAndGlyphs">Line Spacing:</text>
<text class="d" x="1330" y="616" textLength="101" lengthAdjust="spacingAndGlyphs">Text Block Align:</text>
<text class="l" x="1329" y="656" fill="#333" textLength="42" lengthAdjust="spacingAndGlyphs">Rotate:</text>
<path d="M1467.500 605.500h17M1467.500 609h12M1467.500 612.500h17M1467.500 616h12M1533 605.500h17M1535.500 609h12M1533 612.500h17M1535.500 616h12M1596.500 605.500h17M1601.500 609h12M1596.500 612.500h17M1601.500 616h12M1660.500 605.500h17M1660.500 609h17M1660.500 612.500h17M1660.500 616h17" stroke="#b4b4b4" stroke-width="1"/>
<g fill="none" stroke-width="1.300">
<path d="M1471.500 652a11.500 11.500 0 0 0 11.500 10.500a11.500 11.500 0 0 0 0-23" stroke="#888"/><path d="M1471.500 649.500a11.500 11.500 0 0 1 10-10" stroke="#66cc55" stroke-width="2"/>
<path d="M1584.500 652a11.500 11.500 0 0 1-11.500 10.500a11.500 11.500 0 0 1 0-23" stroke="#888"/><path d="M1574.500 639.500a11.500 11.500 0 0 1 10 10" stroke="#66cc55" stroke-width="2"/>
<path d="M1650.500 653a11.500 11.500 0 0 0 23 0" stroke="#888"/><path d="M1650.500 650a11.500 11.500 0 0 1 23 0" stroke="#66cc55" stroke-width="2"/>
</g>
<g font-size="11" fill="#777" text-anchor="middle"><text x="1483.500" y="655">90</text><text x="1572.500" y="655">90</text><text x="1662" y="655" textLength="15" lengthAdjust="spacingAndGlyphs">180</text></g>
<rect x="1306" y="689" width="418" height="1" fill="#bdbdbd"/>
<circle cx="1333" cy="715" r="15" fill="#fff"/><circle cx="1333" cy="715" r="13" fill="#2f9ae8"/>
<text x="1333" y="722" font-size="20" font-weight="bold" fill="#fff" text-anchor="middle">?</text>
<!-- bottom bar -->
<rect x="1" y="967" width="1723" height="41" fill="#d6d6d6"/>
<rect x="1" y="967" width="1723" height="1" fill="#bdbdbd"/>
<g fill="#888">
<rect x="15" y="979" width="1.200" height="17"/><path d="M32 978.500v18l-13-9zM61 978.500v18l-16-9zM202 978.500v18l16-9zM231 978.500v18l13-9z"/><rect x="247" y="979" width="1.200" height="17"/>
</g>
<rect x="73.500" y="976.500" width="59" height="23" fill="#fff" stroke="#c4c4c4"/>
<text x="127" y="993.500" font-size="13.500" fill="#555" text-anchor="end">73</text>
<text x="141" y="993.500" font-size="13.500" fill="#555" text-anchor="middle">/</text>
<text x="152" y="993.500" font-size="13.500" fill="#555" textLength="20" lengthAdjust="spacingAndGlyphs">123</text>
<g fill="#bdbdbd"><rect x="271" y="974" width="1" height="28"/><rect x="364" y="974" width="1" height="28"/><rect x="589" y="974" width="1" height="28"/><rect x="758.500" y="974" width="1" height="28"/><rect x="1156" y="974" width="1" height="28"/><rect x="1655" y="974" width="1" height="28"/></g>
<path class="gi" d="M310 982a9 9 0 1 0 1.500 5.500" stroke-width="1.600"/><path d="M305 977.500l6.500 5-6.500 1.500z" fill="#888"/>
<path class="gi" d="M325 982a9 9 0 1 1-1.500 5.500" stroke-width="1.600"/><path d="M330 977.500l-6.500 5 6.500 1.500z" fill="#888"/>
<circle class="gi" cx="394" cy="985" r="6.500"/><path class="gi" d="M399 990l7 7M391 985h6M394 982v6"/>
<circle class="gi" cx="423" cy="985" r="6.500"/><path class="gi" d="M428 990l7 7M420 985h6"/>
<rect x="452.500" y="976.500" width="119" height="23" fill="#fff" stroke="#c4c4c4"/>
<text x="455" y="993.500" font-size="13.500" fill="#555" textLength="32" lengthAdjust="spacingAndGlyphs">100%</text>
<path d="M557 985h9l-4.500 6z" fill="#555"/>
<path class="gi" d="M612.500 979a2 2 0 0 1 2-2h9l7 6v13a2 2 0 0 1-2 2h-14a2 2 0 0 1-2-2z"/><ellipse class="gi" cx="621" cy="988" rx="6.500" ry="4"/><circle cx="621" cy="988" r="1.500" fill="#8c8c8c"/>
<rect x="636" y="973" width="29" height="29" rx="2" fill="#cbcbcb"/>
<path d="M641 979v18M660 979v18" stroke="#1414d0" stroke-width="1.300" stroke-dasharray="3 2"/><ellipse cx="650.500" cy="988" rx="6.500" ry="4" fill="none" stroke="#1414a8" stroke-width="1.400"/><circle cx="650.500" cy="988" r="1.800" fill="#1414a8"/>
<path class="gi" d="M685 980v-1a2 2 0 0 0-2-2h-9a2 2 0 0 0-2 2v17a2 2 0 0 0 2 2h9a2 2 0 0 0 2-2v-1M685 980v-1a2 2 0 0 1 2-2h8l4 4v15a2 2 0 0 1-2 2h-10a2 2 0 0 1-2-2v-1"/><ellipse class="gi" cx="685.500" cy="988" rx="6" ry="4"/><circle cx="685.500" cy="988" r="1.500" fill="#8c8c8c"/>
<path d="M715 979v18M738 979v18M722 979v5M731 979v5M722 992v5M731 992v5" stroke="#9a9a9a" stroke-width="1.200" stroke-dasharray="3 2"/><circle class="gi" cx="726.500" cy="988" r="4.500"/><circle cx="726.500" cy="988" r="1.500" fill="#8c8c8c"/>
<rect x="776.500" y="975.500" width="290" height="25" fill="#fff" stroke="#c4c4c4"/>
<text x="779" y="993" font-size="14" fill="#555" textLength="42" lengthAdjust="spacingAndGlyphs">Search</text>
<rect x="1017" y="978" width="1" height="20" fill="#b0b0b0"/>
<path d="M1033 982l-5.500 6 5.500 6M1050 982l5.500 6-5.500 6" fill="none" stroke="#c8c8c8" stroke-width="1.200"/>
<text x="1078" y="988" font-size="11.500" fill="#777" textLength="22" lengthAdjust="spacingAndGlyphs">ABC</text>
<path d="M1083 993l4 4 7-6" fill="none" stroke="#777" stroke-width="1.200"/>
<rect x="1110" y="973" width="29" height="29" rx="2" fill="#cbcbcb"/>
<text x="1124" y="994.500" font-size="19" font-weight="bold" fill="#0a0ab0" text-anchor="middle" textLength="20" lengthAdjust="spacingAndGlyphs">Ab</text>
<circle class="gi" cx="1697" cy="988" r="5.500"/><path class="gi" d="M1697 977v3M1697 996v3M1686 988h3M1705 988h3M1689.500 980.500l2 2M1702.500 993.500l2 2M1689.500 995.500l2-2M1702.500 982.500l2-2"/>
<!-- corners -->
<path d="M0 0h8a8 8 0 0 0-8 8zM1725 0h-8a8 8 0 0 1 8 8z" fill="#bfbfbf"/>
<path d="M1 1000a8 8 0 0 0 8 8H0v-8z" fill="#661f0f"/><path d="M1724 1000a8 8 0 0 1-8 8h9v-8z" fill="#661f0f"/>
</svg>
</body></html>
